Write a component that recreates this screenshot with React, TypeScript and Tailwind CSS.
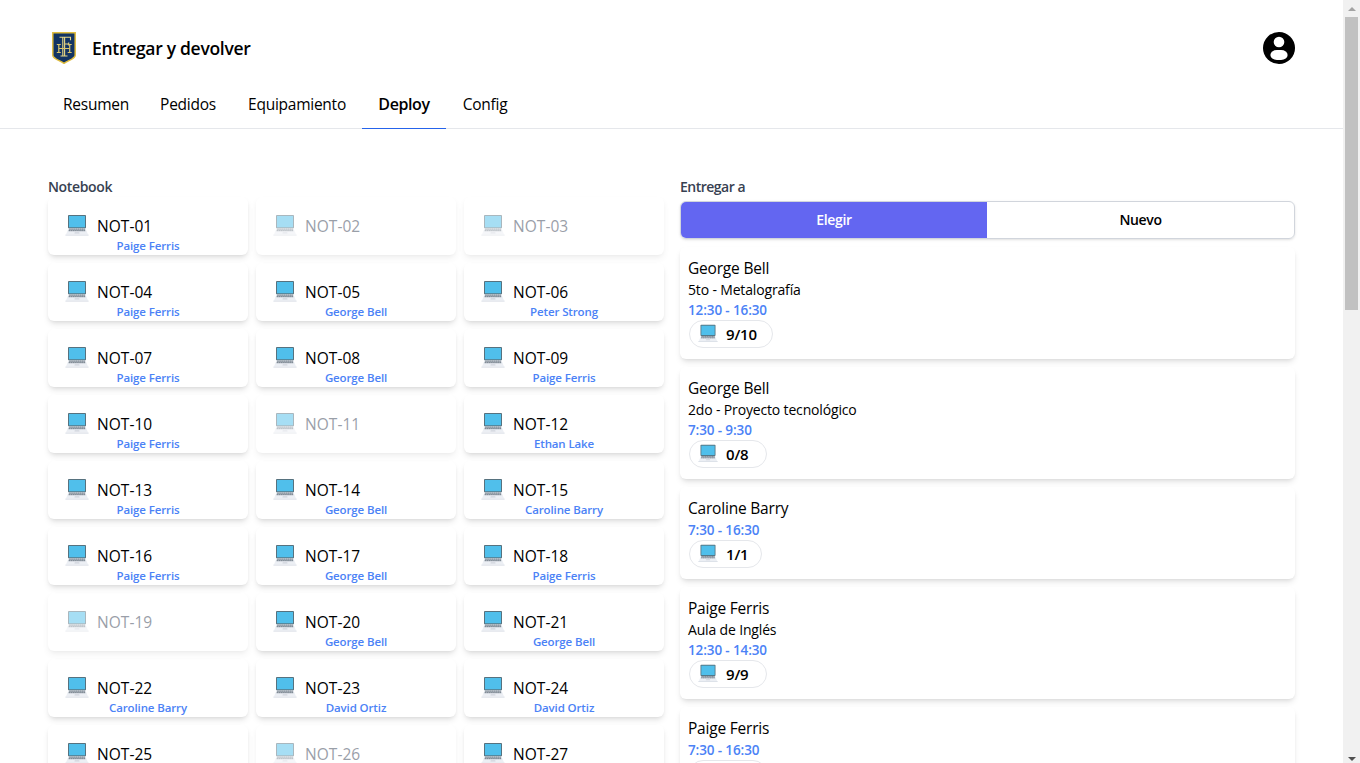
const taken: Record<number, string> = {
  1: 'Paige Ferris', 4: 'Paige Ferris', 5: 'George Bell', 6: 'Peter Strong', 7: 'Paige Ferris', 8: 'George Bell',
  9: 'Paige Ferris', 10: 'Paige Ferris', 12: 'Ethan Lake', 13: 'Paige Ferris', 14: 'George Bell', 15: 'Caroline Barry',
  16: 'Paige Ferris', 17: 'George Bell', 18: 'Paige Ferris', 20: 'George Bell', 21: 'George Bell', 22: 'Caroline Barry',
  23: 'David Ortiz', 24: 'David Ortiz', 25: '', 27: '',
};

const orders = [
  { name: 'George Bell', place: '5to - Metalografía', time: '12:30 - 16:30', count: '9/10', width: 'w-[84px]' },
  { name: 'George Bell', place: '2do - Proyecto tecnológico', time: '7:30 - 9:30', count: '0/8', width: 'w-[78px]' },
  { name: 'Caroline Barry', place: '', time: '7:30 - 16:30', count: '1/1', width: 'w-[73px]' },
  { name: 'Paige Ferris', place: 'Aula de Inglés', time: '12:30 - 14:30', count: '9/9', width: 'w-[78px]' },
  { name: 'Paige Ferris', place: '', time: '7:30 - 16:30', count: '', width: 'w-[78px]' },
];

function Laptop({ className }: { className: string }) {
  return (
    <svg viewBox="0 0 24 24" className={className}>
      <rect x="3" y="1" width="18" height="13.4" rx="0.8" fill="#56727f" />
      <rect x="4" y="2" width="16" height="11.3" fill="#50bfeb" />
      <path d="M3.4 14.4h17.2l2.4 6.2H1z" fill="#eceff4" />
      <path d="M4.2 14.4h15.6l.8 2.8H3.4z" fill="#b4bcc5" />
      <path d="M4.2 15.1h15.6M3.8 16.6h16.4" stroke="#75808a" strokeWidth="0.9" strokeDasharray="1.5 .6" />
      <path d="M9.8 18.2h4.4l.4 1.4H9.4z" fill="#d0d4dc" />
      <path d="M.4 20.6h23.2v1H.4z" fill="#d8dce5" />
    </svg>
  );
}

function Crest() {
  return (
    <svg viewBox="0 0 24 32" className="h-8 w-6" fill="none">
      <path d="M.8.8h22.4v22.4c0 3.4-6.4 5-11.2 8.2C7.2 28.2.8 26.6.8 23.2z" fill="#123463" stroke="#e0bd3e" strokeWidth="1.5" />
      <path d="M7.5 5.2h11v3M10.8 5.2V23.5M12.6 5.2V23.5M8.5 24h7M12.6 12h4.4M16.7 10.5v3" stroke="#e8d785" strokeWidth="1.1" />
      <path d="M6.8 12.500v8M17.700 12.500v8M4.800 12.500h4M15.700 12.500h4M4.800 20.500h4M15.700 20.500h4M6.800 16.500h11" stroke="#d9c56c" strokeWidth="1.2" />
    </svg>
  );
}

function Avatar() {
  return (
    <svg viewBox="0 0 32 32" className="size-8">
      <circle cx="16" cy="16" r="16" />
      <circle cx="16" cy="10" r="5.3" fill="#fff" />
      <rect x="7.4" y="18" width="17.200" height="10" rx="6.500" ry="5" fill="#fff" />
    </svg>
  );
}

function Notebook({ id }: { id: number }) {
  const user = taken[id];
  const isTaken = user !== undefined;
  return (
    <div className={`flex h-[58px] flex-col rounded-md bg-white shadow-md ${isTaken ? '' : 'opacity-50'}`}>
      <div className="flex h-10 items-end pl-[17px]">
        <Laptop className="-mb-px size-6" />
        <span className={`ml-2 h-[23px] text-[15.5px] leading-[25px] tracking-[0.05px] ${isTaken ? 'text-black' : 'text-gray-700'}`}>
          NOT-{String(id).padStart(2, '0')}
        </span>
      </div>
      {user && <p className="mt-px text-center text-[11.5px] leading-4 font-semibold tracking-[-0.12px] text-[#4b82f6]">{user}</p>}
    </div>
  );
}

const tabs = [
  { label: 'Resumen', width: 'w-[96px]' },
  { label: 'Pedidos', width: 'w-[88px]' },
  { label: 'Equipamiento', width: 'w-[130px]' },
  { label: 'Deploy', width: 'w-[84px]' },
  { label: 'Config', width: 'w-[78px]' },
];

export default function App() {
  return (
    <div className="flex h-[763px] w-[1360px] overflow-hidden bg-white font-['Open_Sans','Noto_Sans',sans-serif] text-black">
      <div className="h-full w-[1343px] overflow-hidden">
        <header className="h-[129px] border-b border-gray-200 px-12">
          <div className="flex h-24 items-center pl-1">
            <Crest />
            <h1 className="ml-4 text-[17.5px] font-semibold tracking-[-0.3px]">Entregar y devolver</h1>
            <div className="ml-auto"><Avatar /></div>
          </div>
          <nav className="-mt-4 flex h-[49px]">
            {tabs.map(({ label, width }) => (
              <a key={label} className={`${width} h-[49px] shrink-0 pt-3 text-center leading-[25px] ${label === 'Deploy' ? 'border-b border-[#2563eb] text-base font-semibold tracking-[-0.4px]' : 'text-[15.5px] tracking-[-0.25px]'}`}>{label}</a>
            ))}
          </nav>
        </header>
        <main className="flex gap-4 pt-12 pr-12 pl-12">
          <section className="w-[616px]">
            <h2 className="h-5 text-sm leading-5 font-semibold tracking-[-0.35px] text-[#374151]">Notebook</h2>
            <div className="grid grid-cols-3 gap-2">
              {Array.from({ length: 27 }, (_, i) => <Notebook key={i} id={i + 1} />)}
            </div>
          </section>
          <section className="w-[615px]">
            <h2 className="text-sm leading-5 font-semibold tracking-[-0.5px] text-[#374151]">Entregar a</h2>
            <div className="mt-1 flex h-[38px] overflow-hidden rounded-md border border-gray-300 text-sm font-semibold tracking-[-0.35px] shadow-sm">
              <button className="w-[306px] bg-[#6366f1] text-white">Elegir</button>
              <button className="flex-1">Nuevo</button>
            </div>
            <div className="mt-2 flex flex-col gap-2">
              {orders.map((o, i) => (
                <article key={i} className={`rounded-md bg-white px-[9px] pt-[9px] shadow-md ${o.place ? 'h-[112px]' : 'h-[92px]'}`}>
                  <p className="-ml-px text-[15.5px] leading-6 tracking-[-0.2px]">{o.name}</p>
                  {o.place && <p className="-ml-px text-sm leading-5 tracking-[-0.16px]">{o.place}</p>}
                  <p className="-ml-px text-[13.5px] leading-5 font-semibold tracking-[-0.12px] text-[#4b82f6]">{o.time}</p>
                  <span className={`inline-flex h-7 items-center rounded-full border border-gray-200 pl-2 align-top ${o.width}`}>
                    <Laptop className="size-5" />
                    <span className="ml-2 text-[15px] leading-6 font-semibold tracking-[-0.2px]">{o.count}</span>
                  </span>
                </article>
              ))}
            </div>
          </section>
        </main>
      </div>
      <aside className="flex h-full w-[17px] flex-col items-center bg-[#f1f1f1]">
        <svg className="h-[17px] w-[17px] shrink-0" viewBox="0 0 17 17"><path d="M5 11l4-4 4 4z" fill="#a3a3a3" /></svg>
        <div className="h-[293px] w-[13px] bg-[#c1c1c1]" />
        <svg className="mt-auto h-[17px] w-[17px]" viewBox="0 0 17 17"><path d="M5 11l4 4 4-4z" fill="#505050" /></svg>
      </aside>
    </div>
  );
}
